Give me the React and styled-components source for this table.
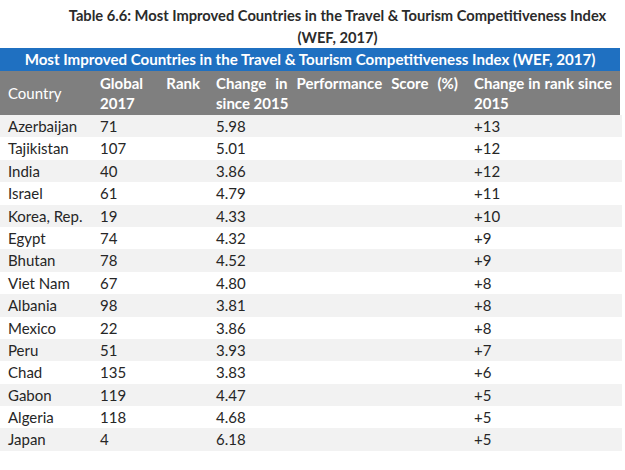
import React from 'react';
import styled, { createGlobalStyle } from 'styled-components';

const GlobalStyle = createGlobalStyle`
    body {
        margin: 0;
        background: #ffffff;
        font-family: Lato, "Liberation Sans", sans-serif;
        color: #262626;
    }
`;

const rows = [
    ['Azerbaijan', '71', '5.98', '+13'],
    ['Tajikistan', '107', '5.01', '+12'],
    ['India', '40', '3.86', '+12'],
    ['Israel', '61', '4.79', '+11'],
    ['Korea, Rep.', '19', '4.33', '+10'],
    ['Egypt', '74', '4.32', '+9'],
    ['Bhutan', '78', '4.52', '+9'],
    ['Viet Nam', '67', '4.80', '+8'],
    ['Albania', '98', '3.81', '+8'],
    ['Mexico', '22', '3.86', '+8'],
    ['Peru', '51', '3.93', '+7'],
    ['Chad', '135', '3.83', '+6'],
    ['Gabon', '119', '4.47', '+5'],
    ['Algeria', '118', '4.68', '+5'],
    ['Japan', '4', '6.18', '+5'],
];

export default function App() {
    return (
        <Page>
            <GlobalStyle />
            <Caption>
                <div>Table 6.6: Most Improved Countries in the Travel &amp; Tourism Competitiveness Index</div>
                <div>(WEF, 2017)</div>
            </Caption>
            <Table>
                <Banner>Most Improved Countries in the Travel &amp; Tourism Competitiveness Index (WEF, 2017)</Banner>
                <HeadRow>
                    <HeadCell>Country</HeadCell>
                    <HeadCell $bold>
                        <Line $justify>Global Rank</Line>
                        <Line>2017</Line>
                    </HeadCell>
                    <HeadCell $bold>
                        <Line $justify>Change in Performance Score (%)</Line>
                        <Line>since 2015</Line>
                    </HeadCell>
                    <HeadCell $bold>
                        <Line $justify>Change in rank since</Line>
                        <Line>2015</Line>
                    </HeadCell>
                </HeadRow>
                {rows.map((r, i) => (
                    <Row key={r[0]} $shaded={i % 2 === 0}>
                        {r.map((v, j) => <Cell key={j}>{v}</Cell>)}
                    </Row>
                ))}
            </Table>
        </Page>
    );
}

const Page = styled.div`
    width: 625px;
    padding-top: 4px;
`;

const Caption = styled.div`
    padding-left: 50px;
    text-align: center;
    font-weight: 700;
    font-size: 14.7px;
    line-height: 22px;
    color: #2b2b2b;
    height: 44px;
`;

const Table = styled.div`
    width: 622px;
`;

const Banner = styled.div`
    width: 620px;
    height: 23px;
    background: #1f70c1;
    color: #ffffff;
    font-weight: 700;
    font-size: 15.1px;
    line-height: 23px;
    text-align: center;
`;

const columns = '92px 116px 258px 154px';

const HeadRow = styled.div`
    width: 620px;
    display: grid;
    grid-template-columns: ${columns};
    background: #7f7f7f;
    color: #ffffff;
    height: 44px;
`;

const HeadCell = styled.div`
    padding: 2px 8px;
    display: flex;
    flex-direction: column;
    justify-content: center;
    font-size: 15px;
    font-weight: ${p => (p.$bold ? 700 : 400)};
    line-height: 20px;
`;

const Line = styled.div`
    white-space: nowrap;
    text-align: ${p => (p.$justify ? 'justify' : 'left')};
    text-align-last: ${p => (p.$justify ? 'justify' : 'left')};
`;

const Row = styled.div`
    display: grid;
    grid-template-columns: ${columns} 2px;
    height: 22.4px;
    background: ${p => (p.$shaded ? '#f2f2f2' : '#ffffff')};
`;

const Cell = styled.div`
    padding: 0 8px;
    font-size: 15px;
    line-height: 22.4px;
    color: #262626;
`;
